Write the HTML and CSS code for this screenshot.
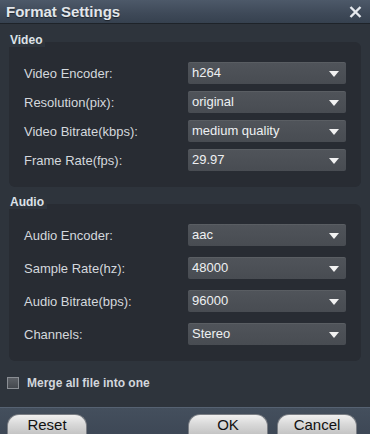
FILE: index.html
```html
<!DOCTYPE html>
<html lang="en">
<head>
    <meta charset="UTF-8">
    <title>Format Settings</title>
    <link rel="stylesheet" href="styles.css">
</head>
<body>
    <div class="dialog">
        <div class="titlebar">
            <h1>Format Settings</h1>
            <svg class="close" width="13" height="12" viewBox="0 0 13 12">
                <path d="M1.5 1 L11.5 11 M11.5 1 L1.5 11" stroke="#e6e9ee" stroke-width="2.4" fill="none"/>
            </svg>
        </div>

        <div class="content">
            <div class="group-title">Video</div>
            <div class="panel video">
                <div class="row"><label>Video Encoder:</label><div class="select">h264</div></div>
                <div class="row"><label>Resolution(pix):</label><div class="select">original</div></div>
                <div class="row"><label>Video Bitrate(kbps):</label><div class="select">medium quality</div></div>
                <div class="row"><label>Frame Rate(fps):</label><div class="select">29.97</div></div>
            </div>

            <div class="group-title">Audio</div>
            <div class="panel audio">
                <div class="row"><label>Audio Encoder:</label><div class="select">aac</div></div>
                <div class="row"><label>Sample Rate(hz):</label><div class="select">48000</div></div>
                <div class="row"><label>Audio Bitrate(bps):</label><div class="select">96000</div></div>
                <div class="row"><label>Channels:</label><div class="select">Stereo</div></div>
            </div>

            <div class="merge">
                <span class="checkbox"></span>
                <span>Merge all file into one</span>
            </div>
        </div>

        <div class="footer">
            <button class="btn">Reset</button>
            <div class="spacer"></div>
            <button class="btn">OK</button>
            <button class="btn">Cancel</button>
        </div>
    </div>
</body>
</html>
```

FILE: styles.css
```css
body {
    margin: 0;
    padding: 0;
    background: #2e343c;
    font-family: 'Liberation Sans', Arial, sans-serif;
    overflow: hidden;
}

.dialog {
    width: 370px;
    height: 434px;
    background: #2e343c;
    overflow: hidden;
}

.titlebar {
    height: 23px;
    display: flex;
    align-items: center;
    justify-content: space-between;
    padding: 0 8px 0 6px;
    background: linear-gradient(to bottom, #4d5969 0%, #3e4958 60%, #36414f 100%);
    border-bottom: 1px solid #1e2329;
}

.titlebar h1 {
    margin: 0;
    font-size: 15px;
    font-weight: bold;
    color: #e2e6eb;
    text-shadow: 0 1px 1px rgba(0,0,0,0.5);
}

.close {
    display: block;
}

.content {
    padding: 9px 9px 0 9px;
}

.group-title {
    position: relative;
    z-index: 1;
    width: fit-content;
    height: 14px;
    line-height: 14px;
    padding: 0 3px 0 1px;
    font-size: 12px;
    font-weight: bold;
    color: #dde2e8;
    background: #2e343c;
}

.panel {
    margin-top: -5px;
    background: #282c33;
    border-radius: 6px;
    display: flex;
    flex-direction: column;
    padding: 20px 15px 16px 15px;
}

.panel.video {
    gap: 7px;
    margin-bottom: 8px;
}

.panel.audio {
    gap: 11px;
}

.row {
    display: flex;
    align-items: center;
    height: 22px;
}

.row label {
    width: 164px;
    font-size: 13px;
    color: #d4d8dd;
}

.select {
    position: relative;
    width: 154px;
    height: 22px;
    line-height: 22px;
    padding-left: 4px;
    font-size: 13px;
    color: #eef0f2;
    background: linear-gradient(to bottom, #50545a 0%, #484c52 100%);
    border-radius: 2px;
    box-shadow: inset 0 1px 0 rgba(255,255,255,0.06);
}

.select::after {
    content: '';
    position: absolute;
    right: 7px;
    top: 9px;
    border-left: 5px solid transparent;
    border-right: 5px solid transparent;
    border-top: 6px solid #f2f2f2;
}

.merge {
    display: flex;
    align-items: center;
    gap: 8px;
    margin: 15px 0 0 -2px;
    height: 14px;
    font-size: 12px;
    font-weight: bold;
    color: #d2d6dc;
}

.checkbox {
    width: 10px;
    height: 10px;
    border: 1px solid #8a8e94;
    background: linear-gradient(to bottom, #5c6066 0%, #44484e 100%);
}

.footer {
    margin-top: 17px;
    height: 26px;
    display: flex;
    align-items: flex-start;
    gap: 9px;
    padding: 6px 13px 0 7px;
    background: linear-gradient(to bottom, #444f5d 0%, #3c4654 100%);
    border-top: 1px solid #566272;
}

.spacer {
    flex: 1;
}

.btn {
    width: 80px;
    height: 20px;
    padding: 0;
    border: 1px solid #7a7e84;
    border-bottom: none;
    border-radius: 12px 12px 0 0;
    background: linear-gradient(to bottom, #f0f0f0 0%, #d8d8d8 50%, #c4c4c4 100%);
    font-family: 'Liberation Sans', Arial, sans-serif;
    font-size: 15px;
    color: #111;
    line-height: 19px;
}
```
